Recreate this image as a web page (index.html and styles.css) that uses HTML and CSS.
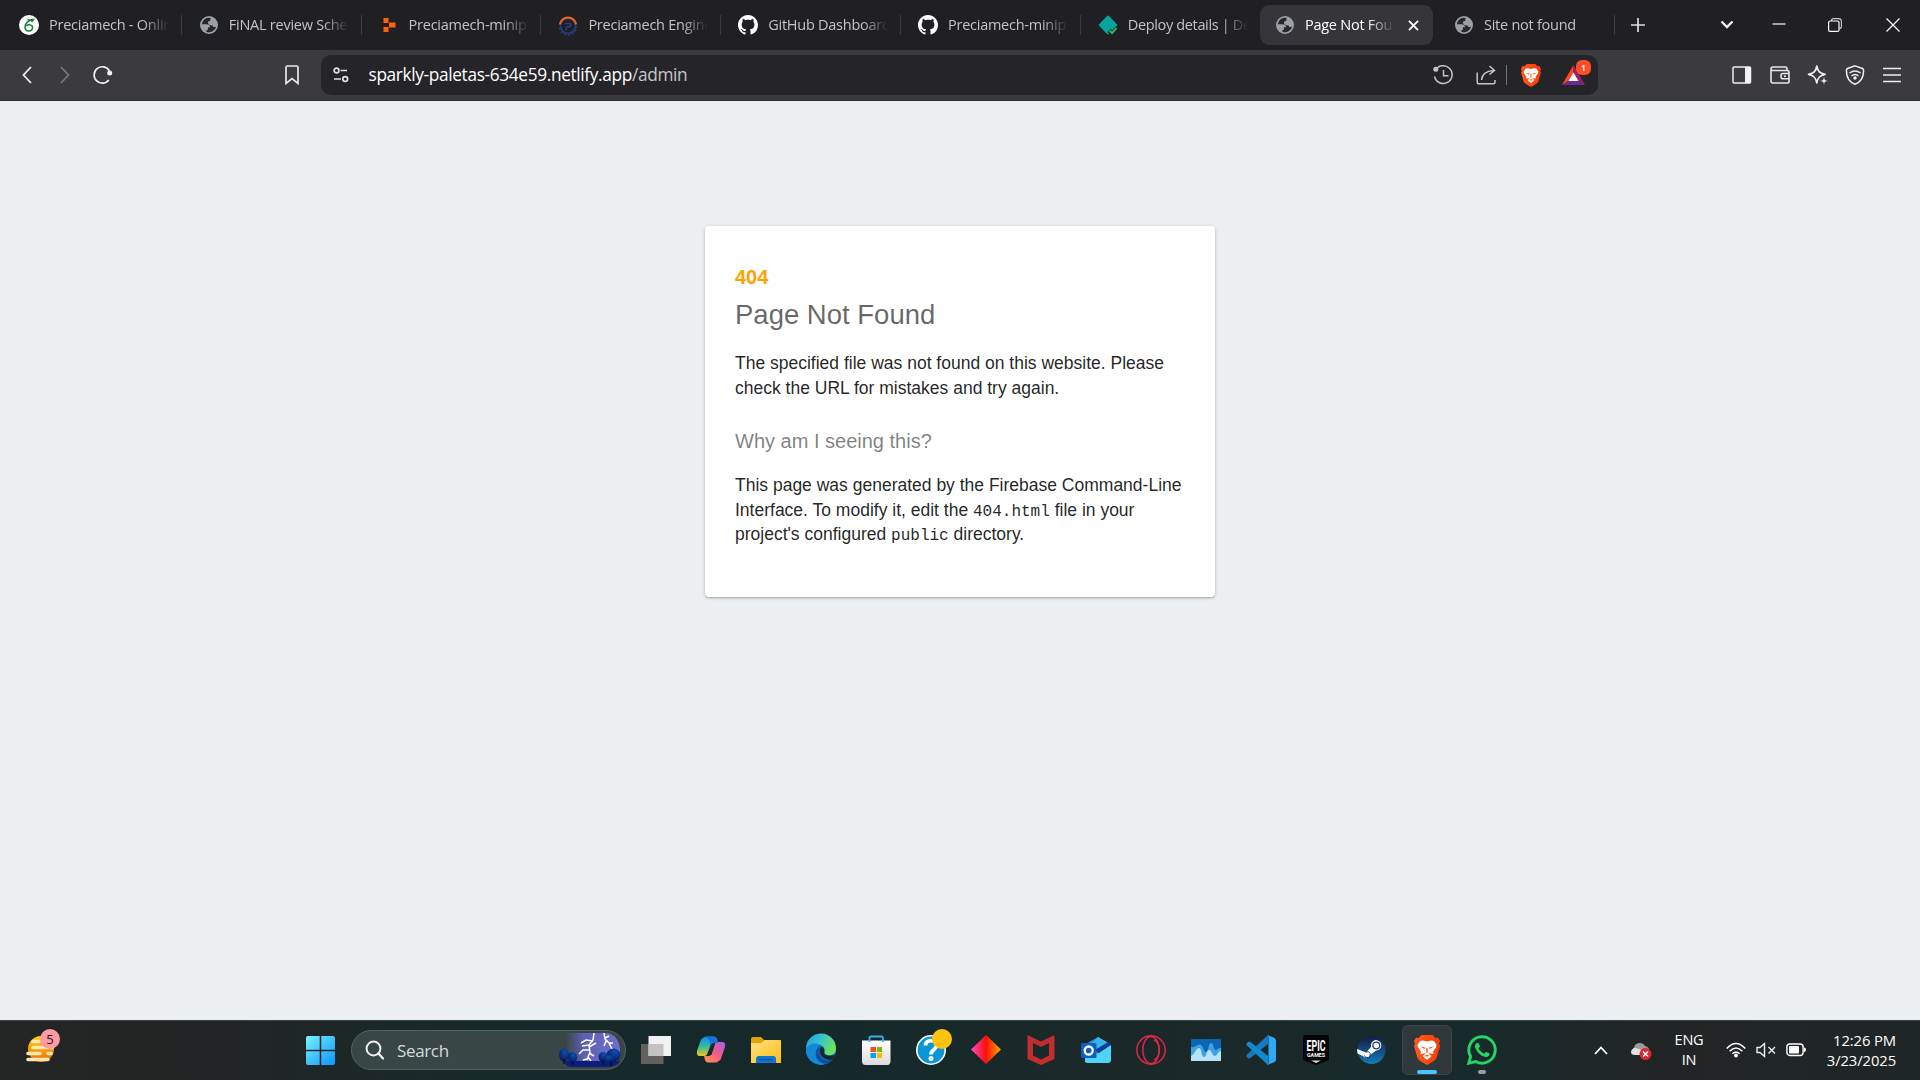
FILE: index.html
```
<!DOCTYPE html>
<html lang="en">
<head>
<meta charset="utf-8">
<title>Page Not Found</title>
<link rel="stylesheet" href="styles.css">
</head>
<body>
<svg width="0" height="0" class="defs" aria-hidden="true">
  <defs>
    <symbol id="globe" viewBox="0 0 24 24"><circle cx="12" cy="12" r="12" fill="#9aa0a6"/><path d="M14.500 2.700A9.700 9.700 0 0 0 2.400 11H8.500C11.500 11 13.500 12.500 13.500 15H10.500V18.500H8.500V20.900A9.700 9.700 0 0 0 21.600 13.500C20 15.500 17 15 17 12.500C14 12.800 10.500 12 10.500 8.800C10.500 7 12 6.500 14 6.500C13.200 5 13.500 3.500 14.500 2.700Z" fill="#28272c"/></symbol>
    <symbol id="github" viewBox="0 0 16 16"><path fill="#fff" d="M8 0C3.580 0 0 3.580 0 8c0 3.540 2.290 6.530 5.470 7.590.4.070.55-.17.55-.38 0-.19-.01-.82-.01-1.490-2.010.37-2.530-.49-2.690-.94-.09-.23-.48-.94-.82-1.130-.28-.15-.68-.52-.01-.53.63-.01 1.080.58 1.230.82.72 1.210 1.870.87 2.330.66.07-.52.28-.87.51-1.070-1.780-.2-3.640-.89-3.640-3.950 0-.87.31-1.590.82-2.150-.08-.2-.36-1.020.08-2.120 0 0 .67-.21 2.200.82.64-.18 1.320-.27 2-.27s1.360.09 2 .27c1.530-1.040 2.200-.82 2.200-.82.44 1.100.16 1.920.08 2.120.51.56.82 1.270.82 2.150 0 3.070-1.870 3.750-3.650 3.950.29.25.54.73.54 1.480 0 1.070-.01 1.930-.01 2.200 0 .21.15.46.55.38A8 8 0 0 0 16 8c0-4.420-3.580-8-8-8z"/></symbol>
    <linearGradient id="lionG" x1="0" x2="1"><stop offset="0" stop-color="#ff5a1f"/><stop offset="1" stop-color="#fb3b04"/></linearGradient>
    <symbol id="brave" viewBox="0 0 26 30"><path d="M7.500 0H18.500L21.500 3L24 2.700L26 6L25 9L26 11L22.500 23L20.500 25.500L13 30L5.500 25.500L3.500 23L0 11L1 9L0 6L2 2.700L4.500 3Z" fill="url(#lionG)"/><path d="M13 6.500L17 5.500L20 6L22.500 10L22 12.500L19 16.500L19.500 19L16 18.500L14.500 17.500L15 19L17.500 21L13 25L8.500 21L11 19L11.500 17.500L10 18.500L6.500 19L7 16.500L4 12.500L3.500 10L6 6L9 5.500Z" fill="#fff"/><path d="M6 11.500L11 12.500L10.500 14ZM20 11.500L15 12.500L15.500 14ZM10 21L13 19.800L16 21L13 21.600ZM12.300 13H13.700V17.500H12.300Z" fill="#fb4a10"/></symbol>
    <linearGradient id="winG" x1="0" y1="0" x2="1" y2="1"><stop offset="0" stop-color="#79f3ff"/><stop offset="1" stop-color="#0a93fb"/></linearGradient>
    <linearGradient id="gold" x1="0" y1="0" x2="1" y2="1"><stop offset="0" stop-color="#ffe17e"/><stop offset="1" stop-color="#ffbd19"/></linearGradient>
    <linearGradient id="sun" x1="0" y1="0" x2="0" y2="1"><stop offset="0" stop-color="#ffd400"/><stop offset="1" stop-color="#ee6c08"/></linearGradient>
    <linearGradient id="sky" x1="0" x2="1"><stop offset="0" stop-color="#5c5fae" stop-opacity="0"/><stop offset=".35" stop-color="#5f61b5"/><stop offset="1" stop-color="#6f6fd0"/></linearGradient>
    <radialGradient id="tree" cx=".6" cy=".25" r=".8"><stop offset="0" stop-color="#0f4fb4"/><stop offset="1" stop-color="#071757"/></radialGradient>
    <linearGradient id="cpA" x1="0" y1="0" x2="0" y2="1"><stop offset="0" stop-color="#168bea"/><stop offset=".5" stop-color="#31b9a0"/><stop offset="1" stop-color="#f4c61b"/></linearGradient>
    <linearGradient id="cpB" x1="1" y1="0" x2="0" y2="1"><stop offset="0" stop-color="#a55bea"/><stop offset=".5" stop-color="#f55c87"/><stop offset="1" stop-color="#ff9b4a"/></linearGradient>
    <linearGradient id="edgeT" x1="0" y1="0" x2="1" y2=".4"><stop offset="0" stop-color="#1b9de2"/><stop offset=".5" stop-color="#35c1d4"/><stop offset="1" stop-color="#6be35a"/></linearGradient>
    <linearGradient id="diaG" x1="0" x2="1"><stop offset="0" stop-color="#ff4bc4"/><stop offset=".5" stop-color="#fb0d0d"/><stop offset="1" stop-color="#ffa800"/></linearGradient>
    <linearGradient id="steamG" x1="0" y1="0" x2="0" y2="1"><stop offset="0" stop-color="#171a45"/><stop offset="1" stop-color="#117cb8"/></linearGradient>
    <linearGradient id="bagG" x1="0" y1="0" x2="0" y2="1"><stop offset="0" stop-color="#fff"/><stop offset="1" stop-color="#dcdcdc"/></linearGradient>
  </defs>
</svg>

<header class="tabs">
  <div class="tab"><svg class="fav big" viewBox="0 0 20 20"><circle cx="10" cy="10" r="10" fill="#fff"/><path d="M14.500 4.500C9.500 5.500 6 8 6 12C6 14.500 7.500 16 9.700 16C12 16 13.500 14.500 13.500 12.500C13.500 9.500 9.500 9 7 11M8.500 4.500C10.500 5.500 12.500 4.500 14.500 4.500L12.500 7" fill="none" stroke="#188038" stroke-width="1.500"/></svg><span class="title">Preciamech - Onlin</span></div>
  <div class="tab"><svg class="fav"><use href="#globe"/></svg><span class="title">FiNAL review Sche</span></div>
  <div class="tab"><svg class="fav" viewBox="0 0 18 18"><path d="M3.500 2H8.500V7H3.500ZM9 6.500H15.500V11.500H9ZM3.500 11H8.500V16H3.500Z" fill="#ff6200"/></svg><span class="title">Preciamech-minip</span></div>
  <div class="tab"><svg class="fav big" viewBox="0 0 20 20"><circle cx="10" cy="11" r="7.500" fill="none" stroke="#263a78" stroke-width="2"/><circle cx="10" cy="11" r="9" fill="none" stroke="#263a78" stroke-width="1.500" stroke-dasharray="2 2"/><path d="M0 11A10 10 0 0 1 20 11H17.500A7.500 7.500 0 0 0 2.500 11Z" fill="#201f24"/><path d="M1.800 9.500A8.300 8.300 0 0 1 18.200 9.500" fill="none" stroke="#f9671f" stroke-width="2"/><path d="M7 8.500H11.500C13.500 8.500 13 11.800 11 11.800H9L7.500 15.500" fill="none" stroke="#2b3d86" stroke-width="1.600"/></svg><span class="title">Preciamech Engine</span></div>
  <div class="tab"><svg class="fav big"><use href="#github"/></svg><span class="title">GitHub Dashboard</span></div>
  <div class="tab"><svg class="fav big"><use href="#github"/></svg><span class="title">Preciamech-minip</span></div>
  <div class="tab last"><svg class="fav big" viewBox="0 0 20 20"><path d="M10 0.500Q11 0.500 19.500 10L10 19.500Q8 18.500 .5 10Q9 .5 10 .5Z" fill="#05a5a0"/><path d="M11 15.500L14 18.500L19 13" fill="none" stroke="#201f24" stroke-width="4"/><path d="M11.500 15.500L14 18L18.500 13" fill="none" stroke="#35b558" stroke-width="2"/></svg><span class="title">Deploy details | De</span></div>
  <div class="tab active"><svg class="fav"><use href="#globe"/></svg><span class="title">Page Not Fou</span><svg class="close" viewBox="0 0 12 12"><path d="M1 1L11 11M11 1L1 11" stroke="#fff" stroke-width="2"/></svg></div>
  <div class="tab end"><svg class="fav"><use href="#globe"/></svg><span class="title">Site not found</span></div>
  <svg class="plus" viewBox="0 0 14 14"><path d="M7 0V14M0 7H14" stroke="#ddd" stroke-width="1.700"/></svg>
  <div class="window-controls">
    <svg width="14" height="10" viewBox="0 0 14 10"><path d="M1.500 1.500L7 7L12.500 1.500" fill="none" stroke="#f2f2f2" stroke-width="2.300"/></svg>
    <svg width="14" height="14" viewBox="0 0 14 14"><path d="M.5 6H13.500" stroke="#fff" stroke-width="1.200"/></svg>
    <svg width="14" height="14" viewBox="0 0 14 14"><path d="M3.500 3V2.500Q3.500 .6 5.500 .6H10.500Q13.400 .6 13.400 3.500V8.500Q13.400 10.500 11.500 10.500" fill="none" stroke="#ccc" stroke-width="1.100"/><rect x=".6" y="3" width="10.400" height="10.400" rx="1.500" fill="none" stroke="#fff" stroke-width="1.200"/></svg>
    <svg width="14" height="14" viewBox="0 0 14 14"><path d="M.5 .5L13.500 13.500M13.500 .5L.5 13.500" stroke="#fff" stroke-width="1.200"/></svg>
  </div>
</header>

<nav class="toolbar">
  <div class="nav-buttons">
    <svg width="10" height="18" viewBox="0 0 10 18"><path d="M9 1L1.500 9L9 17" fill="none" stroke="#f0f0f0" stroke-width="1.800"/></svg>
    <svg width="10" height="18" viewBox="0 0 10 18"><path d="M1 1L8.500 9L1 17" fill="none" stroke="#77767a" stroke-width="1.800"/></svg>
    <svg width="20" height="20" viewBox="0 0 20 20"><path d="M15.800 15A8.200 8.200 0 1 1 16.500 6" fill="none" stroke="#f0f0f0" stroke-width="1.700"/><circle cx="16.700" cy="8" r="2.500" fill="#f0f0f0"/></svg>
  </div>
  <svg class="bookmark" viewBox="0 0 14 20"><path d="M1 2.500Q1 1 2.500 1H11.500Q13 1 13 2.500V18.500L7 13.500L1 18.500Z" fill="none" stroke="#e8e8e8" stroke-width="1.700"/></svg>
  <div class="address">
    <svg class="tune" viewBox="0 0 16 16"><g fill="none" stroke="#e0e0e0" stroke-width="1.700"><circle cx="3.500" cy="3.500" r="2.400"/><path d="M7.500 3.500H14M1 12H8"/><circle cx="12.200" cy="12" r="2.400"/></g></svg>
    <span class="url">sparkly-paletas-634e59.netlify.app<span class="path">/admin</span></span>
    <div class="address-icons">
      <svg width="20" height="20" viewBox="0 0 20 20"><path d="M2.300 5.500A8.900 8.900 0 1 1 1.500 11.500M10.500 5V10.800H15.500" fill="none" stroke="#c5c5c8" stroke-width="1.500"/><circle cx="2.800" cy="4.200" r="2.500" fill="#c5c5c8"/></svg>
      <svg width="20" height="20" viewBox="0 0 20 20"><path d="M1.200 7.500V17Q1.200 18.800 3 18.800H17.500Q19 18.800 19 17V15M5.500 15C6 10 9 6 17.500 5.500M13.500 1L18.500 5.500L13.500 9.500" fill="none" stroke="#c5c5c8" stroke-width="1.500"/></svg>
      <i class="divider"></i>
      <svg class="lion" width="20" height="23"><use href="#brave"/></svg>
      <div class="rewards"><svg width="23" height="20" viewBox="0 0 23 20"><path d="M11.500 0L0 20L7 15.500L11.500 8Z" fill="#ff4724"/><path d="M11.500 0L23 20L15.500 15.500L11.500 8Z" fill="#9e1f63"/><path d="M0 20H23L16 15.500H7Z" fill="#662d91"/><path d="M11.500 7.500L16.500 16H6.500Z" fill="#fff"/></svg><span class="count">1</span></div>
    </div>
  </div>
  <div class="tools">
    <svg width="20" height="20" viewBox="0 0 20 20"><rect x="1" y="2" width="17.500" height="16" rx="1" fill="none" stroke="#eee" stroke-width="1.500"/><path d="M13 2H19V18H13Z" fill="#f2f2f2"/></svg>
    <svg width="20" height="20" viewBox="0 0 20 20"><g fill="none" stroke="#e8e8e8" stroke-width="1.600"><path d="M19 7V17Q19 18 18 18H3Q1 18 1 16V4.500Q1 2 3 2H15.500Q17 2 17 4V5.300M1.500 5.500H17.500Q19 5.500 19 7.500M19 8.500H13Q11 8.500 11 10.500V11.500Q11 13.800 13 13.800H19"/><path d="M14 11.300H16"/></g></svg>
    <svg width="20" height="20" viewBox="0 0 20 20"><path d="M8.800 1.200C9.800 6.500 11.800 8.300 17 9.300C11.800 10.300 9.800 12.500 8.800 17.800C7.800 12.500 5.800 10.300 .6 9.300C5.800 8.300 7.800 6.500 8.800 1.200Z" fill="none" stroke="#eee" stroke-width="1.800" stroke-linejoin="round"/><path d="M16 11.500L17 14.700L20 16L17 17L16 20L15 17L12 16L15 14.700Z" fill="#eee" stroke="#3b3a3f" stroke-width=".5"/></svg>
    <svg width="20" height="20" viewBox="0 0 20 20"><g fill="none" stroke="#eee" stroke-width="1.500"><path d="M10 .9L17.500 3.500Q18.600 4 18.600 5.500C18.600 12 16 17 10 19.200C4 17 1.400 12 1.400 5.500Q1.400 4 2.500 3.500Z"/><path d="M4.500 8Q10 4 15.500 8M6.500 10.800Q10 8 13.500 10.800"/></g><circle cx="10" cy="13" r="1.700" fill="#eee"/></svg>
    <svg width="20" height="20" viewBox="0 0 20 20"><path d="M0 3.500H18M0 10H18M0 16.500H18" stroke="#eee" stroke-width="1.600"/></svg>
  </div>
</nav>

<main class="page">
  <section class="message">
    <h2>404</h2>
    <h1>Page Not Found</h1>
    <p>The specified file was not found on this website. Please check the URL for mistakes and try again.</p>
    <h3>Why am I seeing this?</h3>
    <p>This page was generated by the Firebase Command-Line Interface. To modify it, edit the <code>404.html</code> file in your project's configured <code>public</code> directory.</p>
  </section>
</main>

<footer class="taskbar">
  <div class="widget">
    <svg width="30" height="30" viewBox="0 0 30 30"><circle cx="15" cy="14" r="13" fill="url(#sun)"/><g stroke="#f8e7b5" stroke-width="3.600" stroke-linecap="round"><path d="M7 6.500H13M7 12.500H26M2 18.500H14M22 18.500H25M2 24.500H22"/></g></svg>
    <span class="widget-badge">5</span>
  </div>
  <svg class="start" viewBox="0 0 30 30"><path d="M2 0H14.200V14.200H0V2Q0 0 2 0ZM15.800 0H28Q30 0 30 2V14.200H15.800ZM0 15.800H14.200V30H2Q0 30 0 28ZM15.800 15.800H30V28Q30 30 28 30H15.800Z" fill="url(#winG)"/></svg>
  <div class="search">
    <svg width="20" height="20" viewBox="0 0 20 20"><circle cx="8.500" cy="8.500" r="6.900" fill="none" stroke="#eee" stroke-width="2"/><path d="M13.300 13.300L18 18.500" stroke="#eee" stroke-width="2.300" stroke-linecap="round"/></svg>
    <span>Search</span>
    <svg class="storm" viewBox="0 0 64 34"><path d="M6 0H49Q60 3 61 17Q61 30 48 33H10Z" fill="url(#sky)"/><g fill="none" stroke="#fff" stroke-width="1.500"><path d="M35 0L34 7L30 12L31 19L28 27M34 8L27 7L22 10M30 12L23 13M31 17L24 17L20 21M30 14L37 10M30 20L35 23M28 26L24 27M29 24L32 28"/><path d="M45 0L46 6L50 10L53 16M46 5L50 3M47 8L45 13M50 10L54 10"/></g><path d="M6 28H61Q58 34 48 34H13Q6 34 6 28Z" fill="#0a1f7c"/><g fill="url(#tree)"><ellipse cx="5" cy="22" rx="5" ry="6.500"/><ellipse cx="13.500" cy="24.500" rx="4.500" ry="5.500"/><ellipse cx="44" cy="24" rx="4.500" ry="5"/><ellipse cx="54.500" cy="22" rx="7" ry="6.500"/><ellipse cx="49" cy="26" rx="5" ry="4"/></g><path d="M5 26V31M13.500 28V32M44 27V32M52 28V33" stroke="#030f3c" stroke-width="1.500"/></svg>
  </div>
  <div class="apps">
    <div class="app"><svg viewBox="0 0 30 30"><path d="M0 9H22.500V29H0Z" fill="#62615f"/><path d="M7.500 1H30V21H7.500Z" fill="#f1f1f1"/><path d="M7.500 9H22.500V21H7.500Z" fill="#c3c3c2"/></svg></div>
    <div class="app"><svg viewBox="0 0 30 30"><path d="M7 3Q8 1.500 10 1.500H18Q20 1.500 21 4L22 8H17Q15 8 14 12L11.500 18Q11 21 8 21H4Q0 21 1 16L4.500 6Q5.500 3 7 3Z" fill="url(#cpA)"/><path d="M22.500 26Q21.500 27.500 19.500 27.500H12Q10 27.500 9 25L8 21H13Q15 21 16 17L18.500 10Q19 7 22 7H26Q30 7 29 12L25.500 22Q24.500 26 22.500 26Z" fill="url(#cpB)"/><path d="M9 2L18 1.500Q20 1.500 21 4L22 8H17L14 12Q15 3 9 2Z" fill="#1770df"/><path d="M15 9.500H18.800L15.500 20H11.700Z" fill="#19292c"/></svg></div>
    <div class="app"><svg viewBox="0 0 30 30"><path d="M0 4Q0 2 2 2H10L13 5H30V10H0Z" fill="#e3a008"/><path d="M0 8H10L14 5H28Q30 5 30 7V28H0Z" fill="url(#gold)"/><path d="M5 28V24Q5 21 8 21H22Q25 21 25 24V28Z" fill="#0e77d1"/><path d="M9 24.500H21" stroke="#07539c" stroke-width="1.500" stroke-linecap="round"/></svg></div>
    <div class="app"><svg viewBox="0 0 30 30"><circle cx="15" cy="15" r="15" fill="#0c6ac2"/><path d="M0 13A15 15 0 0 1 30 14C30 19 26 21 21 20C18 19 19 17 18.500 14C17 9 7 7 0 13Z" fill="url(#edgeT)"/><path d="M0 14C2 9 9 7 14 10C10 12 8 21 16 27L18 29.700C8 31 -1 23 0 14Z" fill="#118bd8"/><path d="M14 12C11 15 12 24 21 26L27 24C23 30 12 30 10 21C9 16 11 13 14 12Z" fill="#0b4f9c"/><path d="M14.500 12.500C17 11 19 14 18 16.500C17 19 20 22 29 20L27 24C19 27 11 19 14.500 12.500Z" fill="#16272b"/></svg></div>
    <div class="app"><svg viewBox="0 0 30 30"><path d="M1 5.500H29.500V26Q29.500 30 26 30H4.500Q1 30 1 26Z" fill="url(#bagG)"/><path d="M9.500 12H15V17H9.500Z" fill="#f25022"/><path d="M16 12H21V17H16Z" fill="#7fba00"/><path d="M9.500 18H15V23H9.500Z" fill="#00a4ef"/><path d="M16 18H21V23H16Z" fill="#ffb900"/><path d="M8.500 7V3Q8.500 1.500 10 1.500H20.500Q22 1.500 22 3V7" fill="none" stroke="#2eb3ef" stroke-width="1.800"/></svg></div>
    <div class="app"><svg viewBox="0 0 30 30"><circle cx="15" cy="15" r="14.200" fill="#0a96d5" stroke="#fff" stroke-width="1.600"/><path d="M9.500 10.500C9.500 4 20.500 4 20.500 10.500C20.500 15 15 14.500 15 19.500" fill="none" stroke="#fff" stroke-width="3.800"/><circle cx="15" cy="23.500" r="2.500" fill="#fff"/></svg><i class="alert"></i></div>
    <div class="app"><svg viewBox="0 0 30 30"><path d="M15 0L30 14.500L15 29L0 14.500Z" fill="url(#diaG)"/></svg></div>
    <div class="app"><svg viewBox="0 0 30 30"><path d="M1.500 0L15 6.500L28.500 0V24L15 30L1.500 24ZM7 8V20.500L15 24.500L23 20.500V8L15 12Z" fill="#c22e2f" fill-rule="evenodd"/></svg></div>
    <div class="app"><svg viewBox="0 0 30 30"><path d="M5 9L17 2L29 9V20H5Z" fill="#239bdf"/><path d="M17 2L29 9L18 15L12 8Z" fill="#37b4f0"/><path d="M14 15L28 6.500L30 10L18 19Z" fill="#0a3f91"/><path d="M4 27V20L18 18L30 10V25Q30 28 27 28H6Z" fill="#4fd3f6"/><rect y="8" width="15.500" height="15" rx="1.500" fill="#0e5fbd"/><circle cx="7.700" cy="15.500" r="4" fill="none" stroke="#fff" stroke-width="2.300"/></svg></div>
    <div class="app"><svg viewBox="0 0 30 30"><g fill="none" stroke="#e0254a" stroke-width="1.500"><circle cx="15" cy="15" r="14.200"/><ellipse cx="15" cy="15" rx="8.200" ry="13.500"/><path d="M18 5C25 8 25 22 18 25"/></g></svg></div>
    <div class="app"><svg viewBox="0 0 30 30"><rect y="4" width="30" height="22" rx="1" fill="#0b67b4"/><path d="M0 12C5 13 7 8 10 10C13 12 12 17 15 17C18 17 17 8 20 8C23 8 22 15 25 15C27 15 28 12 30 13V26H0Z" fill="#3fa2e2"/><path d="M0 21C4 19 5 13 8 13C11 13 10 22 13 22C16 22 15 15 18 15C21 15 21 21 24 21C26 21 27 16 30 16V26H0Z" fill="#b7e2fb"/></svg></div>
    <div class="app"><svg viewBox="0 0 30 30"><path d="M22 0L22 9L4.500 23Q3 24 2 23L0.500 21.500Q0 20.500 1 19.500Z" fill="#1679bd"/><path d="M22 30V21L4.500 7Q3 6 2 7L.5 8.500Q0 9.500 1 10.500Z" fill="#1389d2"/><path d="M21.500 0L28.500 3Q30 4 30 5.500V24.500Q30 26 28.500 27L21.500 30Q22.500 29 22.500 27V3Q22.500 1 21.500 0Z" fill="#2fa9f4"/></svg></div>
    <div class="app"><svg viewBox="0 0 30 30"><path d="M4 0H26Q28 0 28 2V25L15 30L2 25V2Q2 0 4 0Z" fill="#050505"/><text x="15" y="15.500" text-anchor="middle" textLength="19" lengthAdjust="spacingAndGlyphs" class="epic">EPIC</text><text x="15" y="21.500" text-anchor="middle" textLength="18" lengthAdjust="spacingAndGlyphs" class="games">GAMES</text><path d="M10 25.500H20L15 28Z" fill="#ddd"/></svg></div>
    <div class="app"><svg viewBox="0 0 30 30"><circle cx="15.500" cy="15" r="14" fill="url(#steamG)"/><path d="M1 14L10 17.500L15 12V9.500A5.200 5.200 0 1 1 20 15.500L14 20A4 4 0 0 1 7 21L1.500 18.500Z" fill="#fff"/><circle cx="20.300" cy="10.500" r="3.400" fill="#fff" stroke="#27406b" stroke-width="1.300"/><path d="M8.500 20.500A3 3 0 1 0 10 17" fill="none" stroke="#27406b" stroke-width="1"/></svg></div>
    <div class="app current"><svg viewBox="0 0 26 30"><use href="#brave"/></svg></div>
    <div class="app running"><svg viewBox="0 0 30 30"><path d="M1.700 28.300L3.600 21.500A13.200 13.200 0 1 1 8.700 26.500Z" fill="none" stroke="#25d366" stroke-width="2.900"/><path d="M10.500 8C8 8.500 7.500 11.500 8.500 13.500C10.500 18 14 21 18.500 22C21 22.300 23 20.500 22.500 18.500L19 16.700L17.300 18.700C15 18 12.500 15.500 11.500 13.500L13 11.500L11.700 8.200Z" fill="#25d366"/></svg></div>
  </div>
  <div class="tray">
    <svg class="chevron" viewBox="0 0 14 9"><path d="M1 8L7 1.500L13 8" fill="none" stroke="#fff" stroke-width="1.800"/></svg>
    <svg class="cloud" viewBox="0 0 21 17"><path d="M5 12A4.500 4.500 0 0 1 3 4.500A6 6 0 0 1 14 3Q19 4 18 9V12Z" fill="#9b9b9b"/><path d="M4 12Q0 12 0 9Q.5 5 5 5L13 8V12Z" fill="#e2e2e2"/><circle cx="14.500" cy="11" r="6" fill="#dc2634"/><path d="M12 8.500L17 13.500M17 8.500L12 13.500" stroke="#fff" stroke-width="1.500"/></svg>
    <div class="lang"><span>ENG</span><span>IN</span></div>
    <div class="status">
      <svg width="20" height="16" viewBox="0 0 20 16"><g fill="none" stroke="#fff" stroke-width="1.500"><path d="M.7 6.500Q10 -3.500 19.300 6.500M3.600 9.300Q10 2.500 16.400 9.300M6.400 11.800Q10 8 13.600 11.800"/></g><circle cx="10" cy="13.500" r="1.900" fill="#fff"/></svg>
      <svg width="20" height="16" viewBox="0 0 20 16"><path d="M1 5.500H4L8.500 1.500V14.500L4 10.500H1ZM12.500 5L19 11.500M19 5L12.500 11.500" fill="none" stroke="#eee" stroke-width="1.400"/></svg>
      <svg width="20" height="16" viewBox="0 0 20 16"><rect x=".9" y="2" width="16.200" height="11.500" rx="3" fill="none" stroke="#fff" stroke-width="1.400"/><rect x="3" y="4" width="10" height="7.500" rx="1" fill="#fff"/><path d="M18 5.500Q20 5.500 20 7.700Q20 10 18 10Z" fill="#fff"/></svg>
    </div>
    <div class="clock"><span class="time">12:26 PM</span><span>3/23/2025</span></div>
  </div>
</footer>
</body>
</html>
```
FILE: styles.css
```
* { box-sizing: border-box; }
body {
  margin: 0;
  height: 1080px;
  display: flex;
  flex-direction: column;
  overflow: hidden;
  background: #eceff1;
  font-family: "Open Sans", "Noto Sans", sans-serif;
}
.defs { position: absolute; }
svg { display: block; flex: none; overflow: visible; }

.tabs {
  height: 50px;
  flex: none;
  display: flex;
  align-items: center;
  padding-left: 2px;
  background: #201f24;
}
.tab {
  width: 179.800px;
  height: 20px;
  flex: none;
  display: flex;
  align-items: center;
  padding-left: 17px;
  border-right: 1px solid #3d3c41;
  color: #c3c3c5;
  font-size: 14.500px;
  letter-spacing: -.25px;
}
.tab.last { border-color: transparent; width: 179.200px; }
.tab.last .title { letter-spacing: -.35px; }
.fav { width: 18px; height: 18px; margin: 0 11px 0 1px; }
.fav.big { width: 20px; height: 20px; margin: 0 10px 0 0; }
.title {
  width: 120px;
  padding-bottom: 2px;
  white-space: nowrap;
  -webkit-mask-image: linear-gradient(to right, #000 94px, transparent 120px);
  mask-image: linear-gradient(to right, #000 94px, transparent 120px);
}
.tab.active {
  width: 173px;
  height: 40px;
  padding-left: 15px;
  margin-right: 5px;
  border: 0;
  border-radius: 9px;
  background: #36353a;
  color: #fff;
}
.active .title {
  width: 90px;
  -webkit-mask-image: linear-gradient(to right, #000 62px, transparent 90px);
  mask-image: linear-gradient(to right, #000 62px, transparent 90px);
}
.tab.end { width: 177.500px; padding-left: 16px; }
.close { width: 11px; height: 11px; margin-left: 13px; }
.plus { width: 14px; height: 14px; margin-left: 16px; }
.window-controls {
  width: 178px;
  display: flex;
  align-items: center;
  gap: 38px;
  margin-left: auto;
  margin-right: 22px;
}
.window-controls svg:nth-child(3) { margin-left: 4px; }
.window-controls svg:nth-child(4) { margin-left: 6px; }

.toolbar {
  height: 51px;
  flex: none;
  display: flex;
  align-items: center;
  border-bottom: 1px solid #302f34;
  background: #3b3a3f;
}
.nav-buttons { display: flex; align-items: center; gap: 26px; padding-left: 22px; }
.nav-buttons svg:nth-child(2) { margin-left: 2px; }
.nav-buttons svg:nth-child(3) { margin-left: -3.500px; }
.bookmark { width: 14px; height: 20px; margin-left: 172.500px; margin-right: 22px; }
.address {
  width: 1277px;
  height: 40px;
  flex: none;
  display: flex;
  align-items: center;
  padding-left: 12px;
  border-radius: 10px;
  background: #252429;
}
.tune { width: 16px; height: 16px; margin-right: 19.500px; }
.url { padding-bottom: 2px; color: #fff; font-size: 17.250px; letter-spacing: -.34px; }
.path { color: #c6c6c9; }
.address-icons { display: flex; align-items: center; margin-left: auto; padding-right: 13px; }
.address-icons svg + svg { margin-left: 23px; }
.divider { width: 1px; height: 20px; margin: 0 14px 0 10px; background: #77767a; }
.rewards { position: relative; margin-left: 21px; }
.address-icons .lion { margin: 0; }
.count {
  position: absolute;
  left: 14px;
  top: -5px;
  width: 15px;
  height: 15px;
  border-radius: 6px;
  background: #ff4d26;
  color: #fff;
  font-size: 9.500px;
  font-weight: 600;
  line-height: 15px;
  text-align: center;
}
.tools { display: flex; gap: 17.700px; margin-left: auto; margin-right: 17px; }

.page {
  flex: 1;
  padding-top: 125px;
  background: #eceff1;
  font-family: "Liberation Sans", Arial, sans-serif;
}
.message {
  width: 510px;
  height: 371px;
  margin: 0 auto;
  padding: 40px 30px;
  border-radius: 4px;
  background: #fff;
  color: rgba(0, 0, 0, .87);
  box-shadow: 0 1px 4px rgba(0, 0, 0, .12), 0 1px 2px rgba(0, 0, 0, .24);
}
.message h2 { margin: 0 0 10px; color: #ffa100; font-size: 20px; line-height: 23px; }
.message h1 { margin: 0 0 21px; color: rgba(0, 0, 0, .6); font-size: 27.500px; font-weight: 400; line-height: 31px; }
.message p { margin: 0 0 30px; font-size: 17.500px; line-height: 24.500px; }
.message h3 { margin: 0 0 20px; color: rgba(0, 0, 0, .5); font-size: 20px; font-weight: 400; line-height: 23px; }
.message code { font-family: "Liberation Mono", monospace; font-size: 16px; line-height: 1; }

.taskbar {
  height: 60px;
  flex: none;
  display: flex;
  align-items: center;
  padding-bottom: 1px;
  border-top: 1px solid #374143;
  background: linear-gradient(to right, #242525 0%, #222525 12%, #18292a 24%, #15292a 42%, #1b2829 60%, #172b2c 76%, #222526 86%, #1f2627 100%);
  color: #fff;
}
.widget { position: relative; width: 306px; padding-left: 26px; }
.widget-badge {
  position: absolute;
  left: 40px;
  top: -6px;
  width: 20px;
  height: 20px;
  border-radius: 50%;
  background: #ff9aa5;
  color: #222;
  font-size: 13px;
  line-height: 20px;
  text-align: center;
}
.start { width: 29px; height: 29px; }
.search {
  width: 275px;
  height: 40px;
  flex: none;
  display: flex;
  align-items: center;
  margin-left: 16px;
  padding-left: 13px;
  border: 1px solid #536160;
  border-radius: 20px;
  background: #384646;
  color: #d6dada;
  font-size: 17px;
  letter-spacing: -.35px;
}
.search span { margin-left: 12px; }
.storm { width: 64px; height: 34px; margin-left: auto; margin-right: 2px; }
.apps { display: flex; margin-left: 2.500px; }
.app {
  position: relative;
  width: 55px;
  height: 50px;
  flex: none;
  display: flex;
  align-items: center;
  justify-content: center;
}
.app svg { width: 30px; height: 30px; }
.alert { position: absolute; left: 28px; top: 4px; width: 20px; height: 20px; border-radius: 50%; background: #ffc20e; }
.epic { fill: #fff; font: bold 14px "Roboto", sans-serif; }
.games { fill: #fff; font: bold 5px "Roboto", sans-serif; }
.app.current { width: 50px; margin: 0 2.500px 0 3px; border-radius: 6px; border: 1px solid #3d4546; background: #2f393b; }
.current::after, .running::after {
  content: "";
  position: absolute;
  bottom: 0;
  left: 50%;
  width: 20px;
  height: 4px;
  margin-left: -10px;
  border-radius: 2px;
  background: #4cc2ff;
}
.running::after { width: 8px; margin-left: -4px; bottom: 1px; background: #9a9d9e; }
.tray { display: flex; align-items: center; margin-left: auto; padding-right: 24px; font-size: 14.500px; line-height: 20px; }
.chevron { width: 14px; height: 9px; }
.cloud { width: 21px; height: 17px; margin-left: 23px; margin-top: 3px; }
.lang { width: 40px; display: flex; flex-direction: column; align-items: center; margin-left: 17px; letter-spacing: -.2px; }
.status { display: flex; gap: 10px; margin-left: 17px; }
.clock { width: 90px; display: flex; flex-direction: column; align-items: flex-end; font-size: 14.800px; letter-spacing: -.1px; }
```
